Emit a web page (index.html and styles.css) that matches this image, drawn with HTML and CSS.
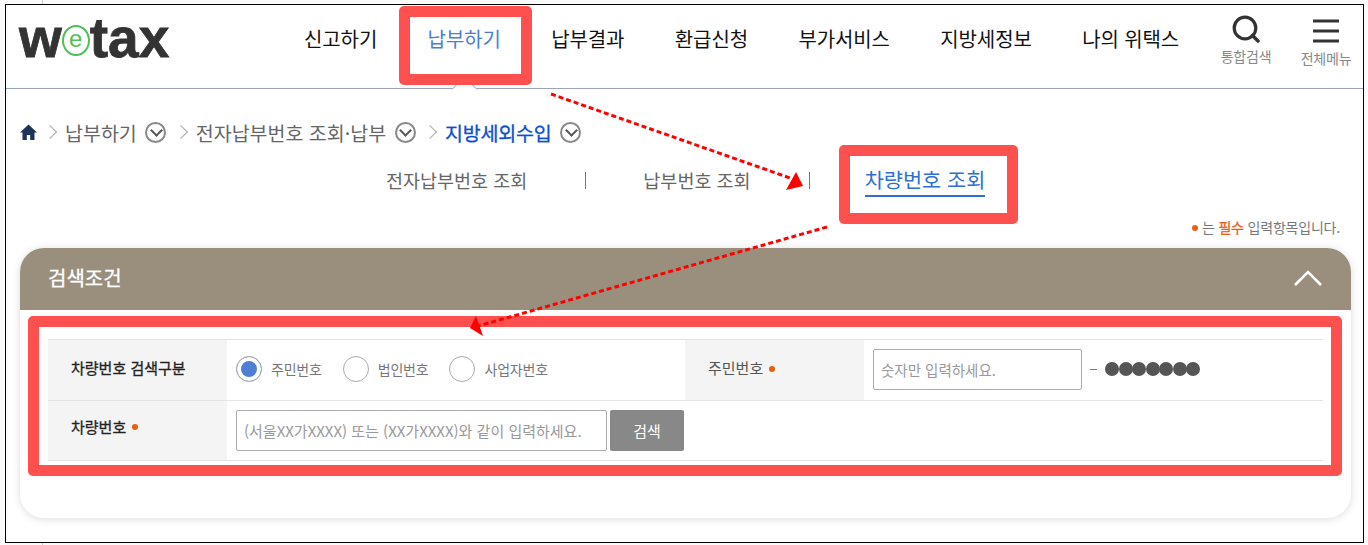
FILE: index.html
```html
<!DOCTYPE html>
<html lang="ko">
<head>
    <meta charset="utf-8">
    <title>위택스 - 지방세외수입</title>
    <link rel="stylesheet" href="styles.css">
</head>
<body>
    <div class="frame">
        <header class="top">
            <a class="logo"><span>w</span><span class="logo-e">e</span><span>tax</span></a>
            <nav class="gnb">
                <a>신고하기</a>
                <a class="on">납부하기</a>
                <a>납부결과</a>
                <a>환급신청</a>
                <a>부가서비스</a>
                <a>지방세정보</a>
                <a>나의 위택스</a>
            </nav>
            <div class="tools">
                <a class="tool">
                    <svg width="28" height="28" viewBox="0 0 28 28"><circle cx="13" cy="13" r="10.800" fill="none" stroke="#333" stroke-width="3.2"/><path d="M20.500 20.500l5.500 5.500" stroke="#333" stroke-width="3.400" stroke-linecap="round"/></svg>
                    <span>통합검색</span>
                </a>
                <a class="tool">
                    <svg width="28" height="28" viewBox="0 0 28 28"><path d="M1 4h26M1 14h26M1 24h26" stroke="#333" stroke-width="3.2"/></svg>
                    <span>전체메뉴</span>
                </a>
            </div>
        </header>

        <main class="content">
            <div class="crumbs">
                <svg class="home" width="17" height="16" viewBox="0 0 17 16"><path d="M8.500 0.500L0 8.500h2.500V16h4.300v-5h3.400v5h4.300V8.500H17z" fill="#1f3358"/></svg>
                <i class="sep"></i>
                <span>납부하기</span>
                <i class="drop"></i>
                <i class="sep"></i>
                <span>전자납부번호 조회·납부</span>
                <i class="drop"></i>
                <i class="sep"></i>
                <span class="cur">지방세외수입</span>
                <i class="drop"></i>
            </div>

            <div class="tabs">
                <a class="tab tab1">전자납부번호 조회</a>
                <b class="bar"></b>
                <a class="tab tab2">납부번호 조회</a>
                <b class="bar"></b>
                <a class="tab tab3 on">차량번호 조회</a>
            </div>

            <p class="note"><em class="dot"></em>는 <strong>필수</strong> 입력항목입니다.</p>

            <section class="panel">
                <div class="panel-head">
                    <h3>검색조건</h3>
                    <svg width="30" height="18" viewBox="0 0 30 18"><path d="M2 16L15 3l13 13" fill="none" stroke="#fff" stroke-width="2.600"/></svg>
                </div>
                <div class="panel-body">
                    <table class="search">
                        <tr>
                            <th class="strong">차량번호 검색구분</th>
                            <td>
                                <div class="radios">
                                    <label class="radio checked"><i></i>주민번호</label>
                                    <label class="radio"><i></i>법인번호</label>
                                    <label class="radio"><i></i>사업자번호</label>
                                </div>
                            </td>
                            <th>주민번호<em class="dot"></em></th>
                            <td>
                                <div class="idnum">
                                    <input class="field short" placeholder="숫자만 입력하세요.">
                                    <span class="dash"></span>
                                    <span class="mask"><i></i><i></i><i></i><i></i><i></i><i></i><i></i></span>
                                </div>
                            </td>
                        </tr>
                        <tr>
                            <th class="strong">차량번호<em class="dot"></em></th>
                            <td colspan="3">
                                <div class="carnum">
                                    <input class="field long" placeholder="(서울XX가XXXX) 또는 (XX가XXXX)와 같이 입력하세요.">
                                    <button class="btn">검색</button>
                                </div>
                            </td>
                        </tr>
                    </table>
                </div>
            </section>
        </main>

        <!-- 빨간 표시 -->
        <div class="mark mark1"></div>
        <div class="mark mark2"></div>
        <div class="mark mark3"></div>
        <svg class="arrows" width="1368" height="545" viewBox="0 0 1368 545">
            <path d="M551 94L790 178" stroke="#f00" stroke-width="3" stroke-dasharray="5 3" fill="none"/>
            <path d="M796 172L803 186L786 190Z" fill="#f00"/>
            <path d="M827 227L478 326" stroke="#f00" stroke-width="3" stroke-dasharray="5 3" fill="none"/>
            <path d="M476 316L470 328L483 336Z" fill="#f00"/>
        </svg>
    </div>
</body>
</html>
```

FILE: styles.css
```css
* {
    box-sizing: border-box;
}
html, body {
    height: 100%;
}
body {
    margin: 0;
    overflow: hidden;
    background: #fafafa linear-gradient(#ccc, #ccc) 42px 0 / 1px 100% no-repeat;
    font-family: "Noto Sans CJK KR", "Noto Sans", sans-serif;
    color: #333;
}
.frame {
    width: 1359px;
    height: 539px;
    margin: 4px 0 0 5px;
    border: 1px solid #000;
    background: #fff;
}

/* header */
.top {
    position: relative;
    display: flex;
    align-items: center;
    height: 84px;
    border-bottom: 1px solid #9aa5bb;
}
.logo {
    display: flex;
    align-items: center;
    width: 285px;
    padding: 0 0 17px 13px;
    font-family: "Liberation Sans", sans-serif;
    font-size: 55px;
    font-weight: bold;
    line-height: 1;
    color: #333;
    -webkit-text-stroke: 0.8px #333;
}
.logo-e {
    display: flex;
    align-items: center;
    justify-content: center;
    width: 28px;
    height: 31px;
    margin: 5px 0 0 0;
    border: 2.500px solid #4fbf5a;
    border-radius: 50%;
    font-size: 24px;
    font-weight: normal;
    color: #4fbf5a;
    padding-bottom: 3px;
    -webkit-text-stroke: 0;
}
.gnb {
    display: flex;
    gap: 50.400px;
    width: 930px;
    padding: 0 0 16px 13px;
    font-size: 20px;
    letter-spacing: -0.1px;
    color: #111;
    white-space: nowrap;
}
.gnb .on {
    position: relative;
    color: #4a7fd0;
}
.gnb .on::after {
    content: "";
    position: absolute;
    left: 27px;
    top: 56px;
    width: 18px;
    height: 18px;
    background: #fff;
    border: 1px solid #9aa5bb;
    border-width: 1px 0 0 1px;
    transform: rotate(45deg);
    clip-path: polygon(0 0, 100% 0, 0 100%);
}
.tools {
    display: flex;
    gap: 30px;
    padding: 0 0 10px 0;
}
.tool {
    display: flex;
    flex-direction: column;
    align-items: center;
    width: 50px;
    font-size: 14px;
    letter-spacing: -0.2px;
    color: #888;
    white-space: nowrap;
}
.tool span {
    margin-top: 3px;
}
.tool + .tool {
    padding-top: 2px;
}

/* content */
.content {
    padding: 0 12px 0 14px;
}
.crumbs {
    display: flex;
    align-items: center;
    height: 28px;
    margin-top: 29px;
    font-size: 19.500px;
    color: #666;
    white-space: nowrap;
}
.home {
    margin-right: 8px;
}
.sep {
    width: 10px;
    height: 10px;
    margin: 0 10px 0 0;
    border: solid #aaa;
    border-width: 1px 1px 0 0;
    transform: rotate(45deg);
}
.crumbs .cur {
    letter-spacing: -0.2px;
    color: #0a50d0;
    -webkit-text-stroke: 0.3px #0a50d0;
}
.drop {
    position: relative;
    width: 21px;
    height: 21px;
    margin: 0 9.500px 0 8.500px;
    border: 2px solid #888;
    border-radius: 50%;
}
.drop::after {
    content: "";
    position: absolute;
    left: 4.500px;
    top: 2.500px;
    width: 7px;
    height: 7px;
    border: solid #555;
    border-width: 0 2px 2px 0;
    transform: rotate(45deg);
}
.tabs {
    position: relative;
    height: 36px;
    margin-top: 16px;
    font-size: 18.500px;
    white-space: nowrap;
    display: flex;
    align-items: center;
    color: #666;
}
.tab1 {
    margin-left: 366px;
}
.bar {
    width: 1px;
    height: 17px;
    background: #777;
    margin: 0 57px 0 58px;
}
.tab2 + .bar {
    margin: 0 55px 0 58px;
}
.tab.on {
    font-size: 20.800px;
    color: #2d6fd6;
    border-bottom: 2px solid #2d6fd6;
    line-height: 32px;
}
.note {
    margin: 19px 0 0;
    height: 20px;
    font-size: 14px;
    letter-spacing: -0.2px;
    line-height: 20px;
    text-align: right;
    color: #777;
    padding-right: 11px;
}
.note strong {
    color: #e8601c;
    -webkit-text-stroke: 0.3px #e8601c;
    font-weight: 400;
}
.dot {
    display: inline-block;
    width: 6px;
    height: 6px;
    margin: 0 6px 3px 6px;
    border-radius: 50%;
    background: #e8600f;
    vertical-align: middle;
}
.note .dot {
    margin-right: 4px;
}
.panel {
    height: 270px;
    margin-top: 11px;
    border-radius: 24px;
    background: #fff;
    box-shadow: 0 1px 8px rgba(0, 0, 0, 0.14);
    overflow: hidden;
}
.panel-head {
    display: flex;
    align-items: center;
    justify-content: space-between;
    height: 62px;
    padding: 0 28px 2px;
    background: #9a8f7d;
}
.panel-head h3 {
    margin: 0 0 2px;
    font-size: 20px;
    font-weight: 400;
    color: #fff;
    -webkit-text-stroke: 0.3px #fff;
}
.panel-body {
    padding: 29px 28px 0;
}

/* search table */
.search {
    width: 1275px;
    border-collapse: collapse;
    table-layout: fixed;
    border-top: 1px solid #e4e4e4;
    font-size: 15px;
}
.search tr {
    height: 60.500px;
    border-bottom: 1px solid #e4e4e4;
}
.search th {
    width: 179px;
    padding: 0 0 4px 23px;
    background: #f4f4f4;
    font-weight: 400;
    text-align: left;
    color: #555;
}
.search tr + tr th {
    padding-bottom: 8px;
}
.search th.strong {
    color: #222;
    -webkit-text-stroke: 0.3px #222;
}
.search td {
    width: 458px;
    padding: 0 9px 1px;
}
.search tr + tr td {
    padding-bottom: 0;
}
.search td:last-child {
    width: 459px;
}
.radios {
    display: flex;
    gap: 21px;
}
.radio {
    display: flex;
    align-items: center;
    gap: 9px;
    font-size: 14px;
    letter-spacing: -0.2px;
    color: #777;
}
.radio i {
    display: block;
    width: 26px;
    height: 26px;
    border: 1px solid #aaa;
    border-radius: 50%;
}
.radio.checked i {
    background: #4f7fd4;
    box-shadow: inset 0 0 0 4px #fff;
}
.idnum, .carnum {
    display: flex;
    align-items: center;
}
.field {
    height: 41px;
    padding: 0 7px;
    border: 1px solid #aaa;
    border-radius: 2px;
    font: inherit;
    background: #fff;
}
.field::placeholder {
    color: #999;
}
.field.short {
    width: 209px;
    font-size: 14.500px;
}
.field.long {
    width: 371px;
    font-size: 15px;
}
.dash {
    width: 7px;
    height: 1px;
    margin: 0 8px;
    background: #777;
}
.mask {
    display: flex;
}
.mask i {
    width: 14px;
    height: 14px;
    border-radius: 50%;
    background: #555;
    margin-right: -0.500px;
}
.btn {
    width: 74px;
    height: 41px;
    margin-left: 3px;
    border: none;
    border-radius: 2px;
    background: #888;
    color: #fff;
    font: inherit;
    font-size: 15px;
}

/* annotation overlay */
.mark {
    position: absolute;
    border: 11px solid #ff5050;
    border-radius: 5px;
}
.mark1 {
    left: 399px;
    top: 6px;
    width: 133px;
    height: 79px;
}
.mark2 {
    left: 839px;
    top: 145px;
    width: 179px;
    height: 79px;
}
.mark3 {
    left: 28px;
    top: 316px;
    width: 1314px;
    height: 160px;
}
.arrows {
    position: absolute;
    left: 0;
    top: 0;
    pointer-events: none;
}
```
